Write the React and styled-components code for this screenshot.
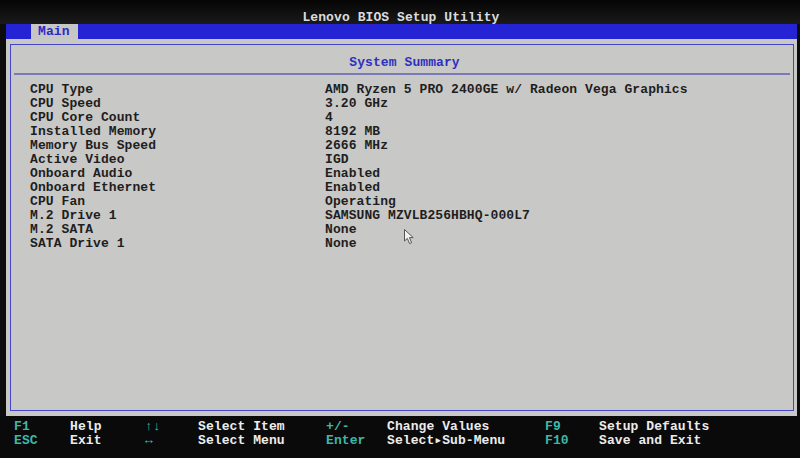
import React from "react";
import styled, { createGlobalStyle } from "styled-components";

const Global = createGlobalStyle`
  html, body { margin: 0; padding: 0; background: #0c0c0c; }
  body { width: 800px; height: 458px; overflow: hidden; }
`;

const mono = `"Liberation Mono", "DejaVu Sans Mono", monospace`;

const Screen = styled.div`
  position: relative;
  width: 800px;
  height: 458px;
  display: flex;
  flex-direction: column;
  background: #0c0c0c;
  font-family: ${mono};
  font-weight: bold;
  font-size: 13px;
  letter-spacing: 0.08px;
`;

const TopBar = styled.div`
  height: 24px;
  box-sizing: border-box;
  padding: 12px 0 0 2px;
  text-align: center;
  background: linear-gradient(#050505, #1a1a1a);
  color: #dcdcdc;
  line-height: 12px;
  overflow: hidden;
`;

const TabBar = styled.div`
  height: 15px;
  margin: 0 3px 0 6px;
  background: #2424d4;
  display: flex;
  padding-left: 25px;
`;

const Tab = styled.div`
  width: 47px;
  background: #c6c6c4;
  color: #2b2bc4;
  line-height: 16px;
  padding-left: 7px;
  box-sizing: border-box;
`;

const Panel = styled.div`
  height: 377px;
  margin: 0 3px 0 6px;
  background: #c8c8c6;
  padding: 5px 3px 5px 4px;
  box-sizing: border-box;
  display: flex;
`;

const Frame = styled.div`
  flex: 1;
  border: 1px solid #4646c8;
  display: flex;
  flex-direction: column;
`;

const Header = styled.div`
  height: 28px;
  padding-top: 11px;
  box-sizing: border-box;
  text-align: center;
  line-height: 14px;
  color: #2f2fc2;
  padding-left: 5px;
`;

const Divider = styled.div`
  height: 2px;
  margin: 0 3px;
  background: #7a7ab8;
`;

const List = styled.div`
  padding: 8px 0 0 19px;
  display: grid;
  grid-template-columns: 295px 1fr;
  line-height: 14px;
  color: #1e1e1e;
`;

const Footer = styled.div`
  flex: 1;
  background: #0a0a0a;
  padding: 4px 0 0 14px;
  display: grid;
  grid-template-columns: 56px 75px 53px 128px 61px 158px 54px 1fr;
  grid-auto-rows: 14px;
  line-height: 14px;
  align-content: start;
`;

const Key = styled.span`
  color: ${(p) => (p.$accent ? "#3cb8a8" : "#ececec")};
  white-space: pre;
`;

const Cursor = styled.svg`
  position: absolute;
  left: 404px;
  top: 229px;
`;

const rows = [
  ["CPU Type", "AMD Ryzen 5 PRO 2400GE w/ Radeon Vega Graphics"],
  ["CPU Speed", "3.20 GHz"],
  ["CPU Core Count", "4"],
  ["Installed Memory", "8192 MB"],
  ["Memory Bus Speed", "2666 MHz"],
  ["Active Video", "IGD"],
  ["Onboard Audio", "Enabled"],
  ["Onboard Ethernet", "Enabled"],
  ["CPU Fan", "Operating"],
  ["M.2 Drive 1", "SAMSUNG MZVLB256HBHQ-000L7"],
  ["M.2 SATA", "None"],
  ["SATA Drive 1", "None"],
];

const help = [
  ["F1", "Help", "↑↓", "Select Item", "+/-", "Change Values", "F9", "Setup Defaults"],
  ["ESC", "Exit", "↔", "Select Menu", "Enter", "Select▸Sub-Menu", "F10", "Save and Exit"],
];

export default function App() {
  return (
    <Screen>
      <Global />
      <TopBar>Lenovo BIOS Setup Utility</TopBar>
      <TabBar>
        <Tab>Main</Tab>
      </TabBar>
      <Panel>
        <Frame>
          <Header>System Summary</Header>
          <Divider />
          <List>
            {rows.map(([k, v]) => (
              <React.Fragment key={k}>
                <span>{k}</span>
                <span>{v}</span>
              </React.Fragment>
            ))}
          </List>
        </Frame>
      </Panel>
      <Footer>
        {help.flatMap((r, ri) =>
          r.map((t, i) => (
            <Key key={ri + "-" + i} $accent={i % 2 === 0}>
              {t}
            </Key>
          ))
        )}
      </Footer>
      <Cursor width="12" height="16" viewBox="0 0 12 16">
        <path
          d="M0.5 0.5 L0.5 12 L3.3 9.4 L5.6 14.6 L7.6 13.7 L5.4 8.6 L9.2 8.6 Z"
          fill="#f2f2f2"
          stroke="#555"
          strokeWidth="1"
          strokeLinejoin="round"
        />
      </Cursor>
    </Screen>
  );
}
